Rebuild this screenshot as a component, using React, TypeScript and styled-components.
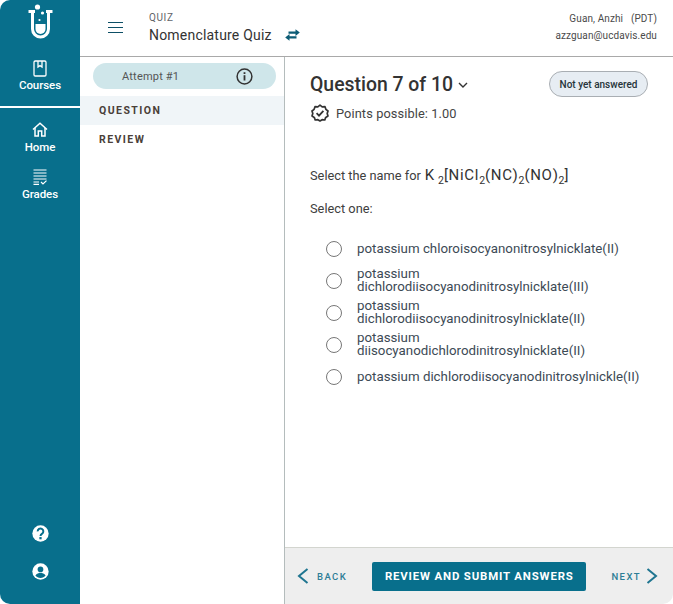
import React from "react";
import styled, { createGlobalStyle } from "styled-components";

const Global = createGlobalStyle`
  html, body { margin: 0; padding: 0; background: #fff; }
  body { font-family: Roboto, "Liberation Sans", sans-serif; }
  * { box-sizing: border-box; }
`;

const Frame = styled.div`
  width: 673px; height: 604px; display: flex; overflow: hidden;
  border-radius: 10px; background: #fff;
`;
const Rail = styled.nav`
  width: 80px; flex: none; background: #086f8c; color: #fff;
  display: flex; flex-direction: column; align-items: stretch;
`;
const LogoWrap = styled.div`
  height: 60px; padding-top: 4px; display: flex; justify-content: center;
`;
const RailItem = styled.div<{ $h: number; $gap: number }>`
  height: ${p => p.$h}px; display: flex; flex-direction: column; align-items: center;
  gap: ${p => p.$gap}px;
  font-size: 11.5px; line-height: 14px; font-weight: 500; letter-spacing: -.05px;
  svg { display: block; }
`;
const RailRule = styled.div`
  height: 2px; background: #fff; margin: 0 0 14px;
`;
const RailFoot = styled.div`
  margin-top: auto; padding-bottom: 24px; display: flex; flex-direction: column;
  align-items: center; gap: 21px;
`;
const Main = styled.div`
  flex: 1; min-width: 0; display: flex; flex-direction: column;
`;
const Header = styled.header`
  height: 57px; flex: none; border-bottom: 1px solid #a9a9a9;
  display: flex; align-items: center; padding: 0 16px 0 28px;
`;
const Burger = styled.div`
  width: 15px; margin-right: 26px; margin-top: -2px;
  display: flex; flex-direction: column; gap: 4px;
  span { display: block; height: 1px; background: #0d4f66; }
`;
const TitleBlock = styled.div`
  display: flex; flex-direction: column; margin-top: 0;
`;
const Eyebrow = styled.div`
  font-size: 10px; line-height: 12px; letter-spacing: .6px; color: #5f6368; margin-bottom: 1px;
`;
const TitleRow = styled.div`
  display: flex; align-items: center; gap: 13px;
  font-size: 14px; line-height: 20px; color: #333; letter-spacing: .2px;
`;
const User = styled.div`
  margin-left: auto; text-align: right; font-size: 10px; line-height: 17px; color: #4a4a4a; margin-top: -2px;
  letter-spacing: .1px;
`;
const Body = styled.div`
  flex: 1; min-height: 0; display: flex;
`;
const SidePanel = styled.aside`
  width: 205px; flex: none; border-right: 1px solid #b4bcbc; padding-top: 6px;
`;
const Pill = styled.div`
  width: 183px; height: 26px; margin-left: 13px; border-radius: 13px; background: #cfe6ea;
  display: flex; align-items: center; justify-content: space-between; padding: 0 23px 0 29px;
  font-size: 11px; color: #555; letter-spacing: .2px; margin-bottom: 7px;
`;
const TabRow = styled.div<{ $active?: boolean }>`
  height: 29px; display: flex; align-items: center; padding-left: 19px;
  font-size: 10.5px; font-weight: 700; letter-spacing: 1.45px; color: #4a4038;
  background: ${p => (p.$active ? "#f0f5f8" : "transparent")};
`;
const Content = styled.section`
  flex: 1; min-width: 0; display: flex; flex-direction: column;
`;
const Scroll = styled.div`
  flex: 1; min-height: 0; padding: 15px 25px 0 25px;
`;
const QHead = styled.div`
  display: flex; align-items: center; justify-content: space-between; height: 24px;
`;
const QTitle = styled.div`
  display: flex; align-items: center; gap: 5px;
  font-size: 19.4px; font-weight: 500; color: #333;
`;
const Status = styled.div`
  width: 99px; height: 26px; border-radius: 13px; border: 1px solid #a9aeb3; background: #e7edf3;
  display: flex; align-items: center; justify-content: center;
  font-size: 10px; font-weight: 500; color: #26343a;
`;
const Points = styled.div`
  display: flex; align-items: center; gap: 7px; margin: 7px 0 0 1px; height: 20px;
  font-size: 12.8px; color: #444; letter-spacing: .1px;
`;
const Prompt = styled.div`
  margin-top: 42px; height: 20px; display: flex; align-items: baseline;
  font-size: 12.8px; color: #404040; line-height: 20px;
`;
const Formula = styled.span`
  font-size: 15px; color: #333; margin-left: 4px; letter-spacing: .7px; font-weight: 400;
  sub { font-size: 10.5px; line-height: 0; letter-spacing: 0; font-weight: 400; }
`;
const FormulaK = styled.span`
  margin-right: 3px;
`;
const SelectOne = styled.div`
  margin-top: 17px; font-size: 12.8px; line-height: 14px; color: #404040;
`;
const Options = styled.div`
  margin: 16px 0 0 16px; display: flex; flex-direction: column;
`;
const Option = styled.label`
  height: 32px; display: flex; align-items: center; gap: 15px;
  font-size: 13.3px; line-height: 13px; color: #3c4a55;
`;
const Radio = styled.span`
  width: 16px; height: 16px; flex: none; border-radius: 50%; border: 1.4px solid #777; background: #fff;
  margin-top: 2px;
`;
const Footer = styled.footer`
  height: 57px; flex: none; background: #eee; border-top: 1px solid #d3d5cf;
  display: flex; align-items: center; justify-content: space-between; padding: 0 15px 0 12px;
`;
const NavBtn = styled.div<{ $gap: number }>`
  display: flex; align-items: center; gap: ${p => p.$gap}px;
  font-size: 9.5px; font-weight: 500; letter-spacing: 1.4px; color: #2d7d96;
`;
const Submit = styled.div`
  width: 214px; height: 29px; border-radius: 2px; background: #086f8c; color: #fff;
  display: flex; align-items: center; justify-content: center;
  font-size: 11.4px; font-weight: 700; letter-spacing: .85px;
`;

const Logo = () => (
  <svg width="27" height="35" viewBox="0 0 27 35" fill="none">
    <path d="M5.5 7 V25 A8 8 0 0 0 13.5 33 A8 8 0 0 0 21.5 25 V7" stroke="#fff" strokeWidth="3" />
    <path d="M1.5 7.5 H8 M19 7.5 H25.5" stroke="#fff" strokeWidth="3" />
    <path d="M8.5 20 H18.5 V25 A5 5 0 0 1 8.5 25 Z" fill="#fff" />
    <circle cx="10.5" cy="3" r="2.6" fill="#fff" />
    <circle cx="15.5" cy="9" r="1.6" fill="#fff" />
    <circle cx="12.5" cy="16" r="1.1" fill="#fff" />
  </svg>
);
const BookIcon = () => (
  <svg width="14" height="17" viewBox="0 0 14 17" fill="none" stroke="#fff" strokeWidth="1.3">
    <rect x="1" y="1" width="12" height="15" rx="1.2" />
    <path d="M5 1 V7 L7 5.6 L9 7 V1" />
  </svg>
);
const HomeIcon = () => (
  <svg width="16" height="15" viewBox="0 0 16 15" fill="none" stroke="#fff" strokeWidth="1.5">
    <path d="M1 7.5 L8 1.2 L15 7.5" />
    <path d="M3 6 V14 H6.3 V9 H9.7 V14 H13 V6" />
  </svg>
);
const GradesIcon = () => (
  <svg width="14" height="16" viewBox="0 0 14 16" fill="none" stroke="#fff" strokeWidth="1.2">
    <path d="M0.5 1 H13.5 M0.5 4 H13.5 M0.5 7 H13.5 M0.5 10 H13.5 M0.5 13 H6 M0.5 15.4 H6" />
    <path d="M8 13 L10 15 L13.5 11.6" />
  </svg>
);
const HelpIcon = () => (
  <svg width="17" height="17" viewBox="0 0 24 24">
    <circle cx="12" cy="12" r="11.5" fill="#fff" />
    <path fill="none" stroke="#086f8c" strokeWidth="2.8" d="M8 9 A4 4 0 1 1 14.3 12.2 C12.8 13.2 12 14 12 15.5" />
    <rect x="10.4" y="17" width="3.2" height="3.2" fill="#086f8c" />
  </svg>
);
const UserIcon = () => (
  <svg width="17" height="17" viewBox="0 0 24 24">
    <circle cx="12" cy="12" r="11.5" fill="#fff" />
    <circle cx="12" cy="9" r="4" fill="#086f8c" />
    <path fill="#086f8c" d="M4.8 17.5 C6.5 14.5 9.5 14 12 14 C14.5 14 17.5 14.5 19.2 17.5 C17.5 19.7 15 21 12 21 C9 21 6.5 19.7 4.8 17.5 Z" />
  </svg>
);
const SwapIcon = () => (
  <svg width="15" height="12" viewBox="0 0 15 12" fill="#0d5c75">
    <path d="M3.5 2.6 H10.5 V0.2 L14.8 3.6 L10.5 7 V4.7 H3.5 Z" />
    <path d="M11.5 7.3 H4.5 V5 L0.2 8.4 L4.5 11.8 V9.4 H11.5 Z" />
  </svg>
);
const InfoIcon = () => (
  <svg width="17" height="17" viewBox="0 0 17 17" fill="none">
    <circle cx="8.5" cy="8.5" r="7.4" stroke="#333" strokeWidth="1.5" />
    <rect x="7.6" y="7.2" width="1.8" height="5.3" fill="#333" />
    <rect x="7.6" y="4.2" width="1.8" height="1.8" fill="#333" />
  </svg>
);
const BadgeIcon = () => (
  <svg width="18" height="18" viewBox="0 0 18 18" fill="none" stroke="#333" strokeWidth="1.7">
    <path d="M9 1.2 L11.2 2.9 L14 2.7 L14.9 5.3 L17 7 L16.2 9.6 L17 12 L14.7 13.4 L13.8 16 L11.1 15.7 L9 17 L6.9 15.7 L4.2 16 L3.3 13.4 L1 12 L1.8 9.6 L1 7 L3.1 5.3 L4 2.7 L6.8 2.9 Z" strokeLinejoin="round" />
    <path d="M5.6 9.2 L8 11.6 L12.4 6.8" strokeWidth="1.8" />
  </svg>
);
const Caret = () => (
  <svg width="10" height="7" viewBox="0 0 10 7" fill="none" stroke="#333" strokeWidth="1.4" style={{ marginTop: 2 }}>
    <path d="M1 1 L5 5 L9 1" />
  </svg>
);
const Chevron = ({ flip }: { flip?: boolean }) => (
  <svg width="12" height="16" viewBox="0 0 12 16" fill="none" stroke="#1f7590" strokeWidth="2">
    <path d={flip ? "M1.5 1 L10 8 L1.5 15" : "M10.5 1 L2 8 L10.5 15"} />
  </svg>
);

const options: string[][] = [
  ["potassium chloroisocyanonitrosylnicklate(II)"],
  ["potassium", "dichlorodiisocyanodinitrosylnicklate(III)"],
  ["potassium", "dichlorodiisocyanodinitrosylnicklate(II)"],
  ["potassium", "diisocyanodichlorodinitrosylnicklate(II)"],
  ["potassium dichlorodiisocyanodinitrosylnickle(II)"],
];

export default function App() {
  return (
    <Frame>
      <Global />
      <Rail>
        <LogoWrap><Logo /></LogoWrap>
        <RailItem $h={46} $gap={1}>
          <BookIcon />
          <span>Courses</span>
        </RailItem>
        <RailRule />
        <RailItem $h={47} $gap={3}>
          <HomeIcon />
          <span>Home</span>
        </RailItem>
        <RailItem $h={40} $gap={2}>
          <GradesIcon />
          <span>Grades</span>
        </RailItem>
        <RailFoot>
          <HelpIcon />
          <UserIcon />
        </RailFoot>
      </Rail>
      <Main>
        <Header>
          <Burger><span /><span /><span /></Burger>
          <TitleBlock>
            <Eyebrow>QUIZ</Eyebrow>
            <TitleRow>Nomenclature Quiz <SwapIcon /></TitleRow>
          </TitleBlock>
          <User>
            <div>Guan, Anzhi &nbsp; (PDT)</div>
            <div>azzguan@ucdavis.edu</div>
          </User>
        </Header>
        <Body>
          <SidePanel>
            <Pill>Attempt #1 <InfoIcon /></Pill>
            <TabRow $active>QUESTION</TabRow>
            <TabRow>REVIEW</TabRow>
          </SidePanel>
          <Content>
            <Scroll>
              <QHead>
                <QTitle>Question 7 of 10 <Caret /></QTitle>
                <Status>Not yet answered</Status>
              </QHead>
              <Points><BadgeIcon /> Points possible: 1.00</Points>
              <Prompt>
                Select the name for
                <Formula><FormulaK>K</FormulaK><sub>2</sub>[NiCl<sub>2</sub>(NC)<sub>2</sub>(NO)<sub>2</sub>]</Formula>
              </Prompt>
              <SelectOne>Select one:</SelectOne>
              <Options>
                {options.map((lines, i) => (
                  <Option key={i}>
                    <Radio />
                    <span>{lines.map((l, j) => <div key={j}>{l}</div>)}</span>
                  </Option>
                ))}
              </Options>
            </Scroll>
            <Footer>
              <NavBtn $gap={8}><Chevron /> BACK</NavBtn>
              <Submit>REVIEW AND SUBMIT ANSWERS</Submit>
              <NavBtn $gap={5}>NEXT <Chevron flip /></NavBtn>
            </Footer>
          </Content>
        </Body>
      </Main>
    </Frame>
  );
}
